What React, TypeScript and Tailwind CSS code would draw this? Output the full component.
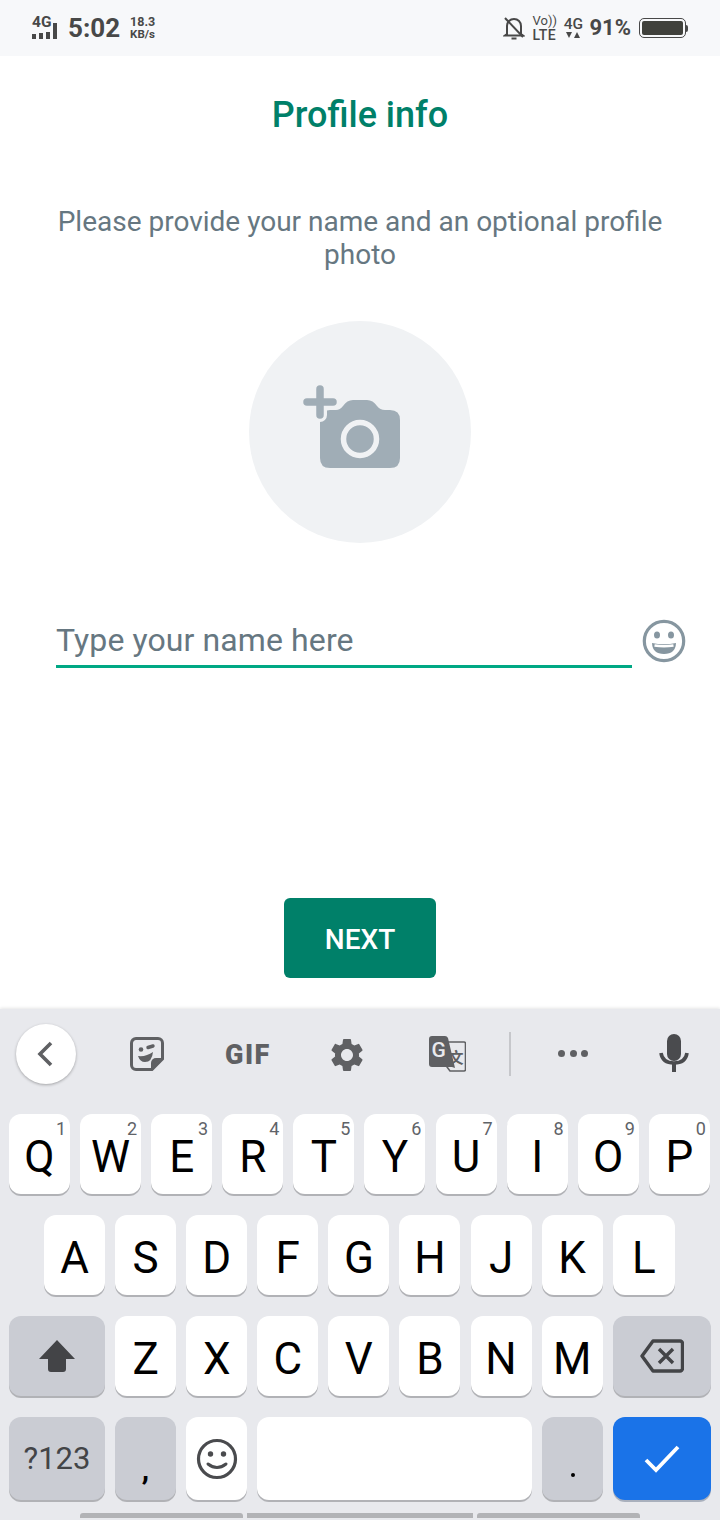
import { MdSettings } from 'react-icons/md';

const roboto = 'font-[Roboto,sans-serif]';

const Key = ({ label, hint, className = 'w-[61px] bg-white', textClass = 'text-[44px] text-black mt-[5px]', children }: {
    label?: string;
    hint?: string;
    className?: string;
    textClass?: string;
    children?: React.ReactNode;
}) => (
    <div className={`relative h-[80px] rounded-[12px] shadow-[0_2px_0_#b1b2b6] flex items-center justify-center shrink-0 ${className}`}>
        {label && <span className={`leading-none ${textClass}`}>{label}</span>}
        {children}
        {hint && <span className="absolute top-[5px] right-[4px] text-[18px] leading-[20px] text-[#5f6368]">{hint}</span>}
    </div>
);

const StatusBar = () => (
    <div className="h-[56px] bg-[#f7f8fa] flex items-center text-[#484848] font-bold">
        <div className="ml-[32px] w-[29px] flex flex-col">
            <span className="text-[15.5px] leading-[15px] mt-[-3px]">4G</span>
            <div className="flex items-end gap-[3px] mt-[2px]">
                <div className="w-[4px] h-[5px] bg-[#484848]" />
                <div className="w-[4px] h-[6px] bg-[#484848]" />
                <div className="w-[4px] h-[7px] bg-[#484848]" />
                <div className="w-[4px] h-[16px] mt-[-10px] bg-[#484848]" />
            </div>
        </div>
        <span className="ml-[7px] text-[26px] leading-none">5:02</span>
        <div className="ml-[10px] flex flex-col items-start text-[12.5px] leading-[13px]">
            <span>18.3</span>
            <span className="text-[11.5px]">KB/s</span>
        </div>
        <div className="ml-auto flex items-center">
            <svg width="22" height="26" viewBox="0 0 22 26" fill="none" stroke="#484848" strokeWidth="2">
                <path d="M4 19V11c0-4 3-7 7-7s7 3 7 7v8l2 1.5H2z" />
                <path d="M8.5 23.5h5" />
                <path d="M2 3l18 19" />
            </svg>
            <div className="ml-[7px] w-[26px] flex flex-col font-medium text-[14px] leading-[14px]">
                <span className="text-[13px] font-normal">Vo))</span>
                <span className="tracking-[0.5px]">LTE</span>
            </div>
            <div className="ml-[5px] w-[20px] flex flex-col items-center">
                <span className="text-[15.5px] leading-[14px] font-medium">4G</span>
                <svg width="16" height="8" viewBox="0 0 16 8" fill="#484848">
                    <path d="M1 1h6L4 7z" />
                    <path d="M9 7h6l-3-6z" />
                </svg>
            </div>
            <span className="ml-[6px] text-[22px] leading-none">91%</span>
            <div className="ml-[8px] mr-[32px] flex items-center">
                <div className="w-[47px] h-[20px] rounded-[5px] border-[1.5px] border-[#484848] p-[2px]">
                    <div className="h-full rounded-[2px] bg-[#40413c]" />
                </div>
                <div className="w-[2px] h-[7px] rounded-r-[2px] bg-[#484848]" />
            </div>
        </div>
    </div>
);

const CameraIcon = () => (
    <svg width="120" height="120" viewBox="300 372 120 120">
        <path fill="#a0adb6" d="M330 410h6q4 0 7-4q4-6 10-6h14q6 0 10 6q3 4 8 4h5q10 0 10 10v38q0 10-10 10h-60q-10 0-10-10v-38q0-10 10-10z" />
        <circle cx="360" cy="439" r="16.5" fill="none" stroke="#f0f2f4" strokeWidth="5.5" />
        <path d="M307 402h26M320 389v26" stroke="#f0f2f4" strokeWidth="14" strokeLinecap="round" fill="none" />
        <path d="M307 402h26M320 389v26" stroke="#a0adb6" strokeWidth="7.5" strokeLinecap="round" fill="none" />
    </svg>
);

const LaughIcon = () => (
    <svg width="44" height="44" viewBox="0 0 44 44" fill="none">
        <circle cx="22" cy="22" r="19.7" stroke="#8696a0" strokeWidth="3.2" />
        <ellipse cx="15" cy="16" rx="3" ry="3.5" fill="#8696a0" />
        <ellipse cx="29" cy="16" rx="3" ry="3.5" fill="#8696a0" />
        <path d="M10 24q12 2.5 24 0q-.5 11-12 11t-12-11z" fill="#8696a0" />
        <path d="M12.5 26.5q9.5 1.5 19 0" stroke="#fff" strokeWidth="2.4" />
    </svg>
);

const Toolbar = () => (
    <div className="h-[105px] pt-[15px] flex items-start">
        <div className="ml-[16px] w-[60px] h-[60px] rounded-full bg-white shadow-[0_1px_3px_rgba(0,0,0,0.3)] flex items-center justify-center">
            <svg width="24" height="28" viewBox="0 0 24 28" fill="none" stroke="#5f6063" strokeWidth="3.6">
                <path d="M17 3L6 14l11 11" />
            </svg>
        </div>
        <svg className="ml-[54px] mt-[13px]" width="34" height="34" viewBox="0 0 34 34" fill="none" stroke="#5f6063" strokeWidth="3">
            <path d="M6 1.5h22a4.5 4.5 0 0 1 4.500 4.500v16L22 32.500H6a4.500 4.500 0 0 1-4.500-4.500V6A4.500 4.500 0 0 1 6 1.500z" />
            <path d="M32 21h-6a5 5 0 0 0-5 5v6.500z" fill="#5f6063" stroke="none" />
            <circle cx="11" cy="12.500" r="2.300" fill="#5f6063" stroke="none" />
            <path d="M18 10.500l5-1.500" strokeWidth="3.400" strokeLinecap="round" />
            <path d="M8 19q8 1 15-4q-1 10-8 10q-5 0-7-6z" fill="#5f6063" stroke="none" />
        </svg>
        <span className="ml-[61px] mt-[16px] w-[44px] text-[27px] leading-[30px] font-black text-[#5f6063] tracking-[1.5px]">GIF</span>
        <MdSettings className="ml-[58px] mt-[11px] text-[#5f6063]" size={40} />
        <svg className="ml-[62px] mt-[12px]" width="37" height="36" viewBox="0 0 37 36">
            <path d="M18 6h17a1.500 1.500 0 0 1 1.500 1.500v26a1.500 1.500 0 0 1-1.500 1.500H21l-3-4z" fill="none" stroke="#5f6063" strokeWidth="1.600" />
            <path d="M3 0h13q2 0 3 2l7 30-3-1H3a3 3 0 0 1-3-3V3a3 3 0 0 1 3-3z" fill="#5f6063" />
            <text x="2.500" y="21" fontSize="21" fontWeight="500" fill="#e8e9ed" fontFamily="Roboto, sans-serif">G</text>
            <text x="19.500" y="27" fontSize="15" fontWeight="700" fill="#5f6063" fontFamily="'Noto Sans CJK SC', sans-serif">文</text>
        </svg>
        <div className="ml-[43px] mt-[8px] w-[2px] h-[44px] bg-[#c6c7cb]" />
        <div className="ml-[47px] mt-[26px] w-[30px] flex justify-between">
            <div className="w-[7px] h-[7px] rounded-full bg-[#5f6063]" />
            <div className="w-[7px] h-[7px] rounded-full bg-[#5f6063]" />
            <div className="w-[7px] h-[7px] rounded-full bg-[#5f6063]" />
        </div>
        <svg className="ml-[71px] mt-[10px]" width="30" height="38" viewBox="0 0 30 38" fill="none">
            <rect x="8" y="0" width="14" height="27" rx="7" fill="#4a4b4e" />
            <path d="M2 19c1 7 6 10 13 10s12-3 13-10" stroke="#4a4b4e" strokeWidth="3.600" />
            <path d="M15 28v10" stroke="#4a4b4e" strokeWidth="4" />
        </svg>
    </div>
);

const Keyboard = () => (
    <div className="h-[511px] bg-[#e8e9ed] shadow-[0_-1px_3px_rgba(0,0,0,0.1)] flex flex-col">
        <Toolbar />
        <div className="pl-[9px] flex gap-[10.1px]">
            {['Q', 'W', 'E', 'R', 'T', 'Y', 'U', 'I', 'O', 'P'].map((k, i) => (
                <Key key={k} label={k} hint={String((i + 1) % 10)} />
            ))}
        </div>
        <div className="pl-[44px] mt-[21px] flex gap-[10.1px]">
            {['A', 'S', 'D', 'F', 'G', 'H', 'J', 'K'].map((k) => (
                <Key key={k} label={k} />
            ))}
            <Key className="w-[62px] bg-white" label="L" />
        </div>
        <div className="pl-[9px] mt-[21px] flex gap-[10.1px]">
            <Key className="w-[96px] bg-[#caccd3]">
                <svg width="38" height="34" viewBox="0 0 38 34" fill="#434447">
                    <path d="M19 1L37 20H28V30a3 3 0 0 1-3 3H13a3 3 0 0 1-3-3V20H1z" />
                </svg>
            </Key>
            {['Z', 'X', 'C', 'V', 'B', 'N', 'M'].map((k) => (
                <Key key={k} label={k} />
            ))}
            <Key className="w-[98px] bg-[#caccd3]">
                <svg width="44" height="34" viewBox="0 0 44 34" fill="none" stroke="#434447" strokeWidth="3.400">
                    <path d="M13 2h27a2.500 2.500 0 0 1 2.500 2.500v25a2.500 2.500 0 0 1-2.500 2.500H13L2 17z" strokeLinejoin="round" />
                    <path d="M19 10l14 14M33 10L19 24" />
                </svg>
            </Key>
        </div>
        <div className="pl-[9px] mt-[21px] flex gap-[10px]">
            <Key className="w-[96px] !h-[83px] bg-[#caccd3]" label="?123" textClass="text-[31px] text-[#434447]" />
            <Key className="w-[61px] !h-[83px] bg-[#caccd3] !items-end pb-[15px]" label="," textClass="text-[30px] font-bold text-black" />
            <Key className="w-[61px] !h-[83px] bg-white">
                <svg width="42" height="42" viewBox="0 0 42 42" fill="none">
                    <circle cx="21" cy="21" r="18.500" stroke="#4a4b4e" strokeWidth="3.200" />
                    <circle cx="14.500" cy="16" r="2.700" fill="#4a4b4e" />
                    <circle cx="27.500" cy="16" r="2.700" fill="#4a4b4e" />
                    <path d="M12 26q9 7 18 0" stroke="#4a4b4e" strokeWidth="3" strokeLinecap="round" />
                </svg>
            </Key>
            <Key className="w-[275px] !h-[83px] bg-white" />
            <Key className="w-[61px] !h-[83px] bg-[#caccd3] !items-end pb-[23px]">
                <div className="w-[4px] h-[4px] rounded-full bg-black" />
            </Key>
            <Key className="w-[98px] !h-[83px] bg-[#1a73e8] !shadow-[0_2px_0_#a9b0bd]">
                <svg width="36" height="28" viewBox="0 0 36 28" fill="none" stroke="#fff" strokeWidth="3.800">
                    <path d="M2 15l10 10L34 2" />
                </svg>
            </Key>
        </div>
        <div className="mt-[13px] pl-[80px] flex gap-[4px]">
            <div className="w-[163px] h-[5px] rounded-t-[3px] bg-[#b2b3b6]" />
            <div className="w-[226px] h-[5px] bg-[#b2b3b6]" />
            <div className="w-[163px] h-[5px] rounded-t-[3px] bg-[#b2b3b6]" />
        </div>
    </div>
);

export default function App() {
    return (
        <div className={`w-[720px] h-[1520px] overflow-hidden bg-white flex flex-col ${roboto}`}>
            <StatusBar />
            <div className="h-[953px] flex flex-col items-center">
                <h1 className="mt-[37px] text-[36px] leading-[44px] font-medium text-[#008069]">Profile info</h1>
                <p className="mt-[68px] w-[640px] text-center text-[28px] leading-[33px] text-[#667781]">
                    Please provide your name and an optional profile photo
                </p>
                <div className="mt-[50px] w-[222px] h-[222px] rounded-full bg-[#f0f2f4] flex items-center justify-center">
                    <CameraIcon />
                </div>
                <div className="mt-[74px] w-full pl-[56px] flex items-start">
                    <div className="w-[576px] h-[51px] border-b-[3px] border-[#00a884] text-[32px] leading-[46px] tracking-[0.1px] text-[#667781]">
                        Type your name here
                    </div>
                    <div className="ml-[10px] mt-[2px]">
                        <LaughIcon />
                    </div>
                </div>
                <button className="mt-[230px] w-[152px] h-[80px] pt-[3px] rounded-[6px] bg-[#008069] text-white text-[28px] font-medium">
                    NEXT
                </button>
            </div>
            <Keyboard />
        </div>
    );
}
